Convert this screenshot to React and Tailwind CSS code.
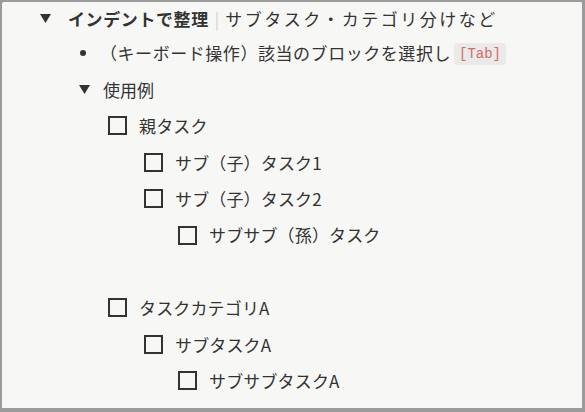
import React from "react";

const Triangle = () => (
  <svg width="11" height="9" viewBox="0 0 11 9" className="block">
    <path d="M0 0 L11 0 L5.5 9 Z" fill="#333333" />
  </svg>
);

const Checkbox = () => (
  <span className="block w-[19px] h-[19px] border-2 border-[#333333] bg-transparent" />
);

const todos = [
  { text: "親タスク", pad: "pl-[106px]", h: "h-[36.4px]" },
  { text: "サブ（子）タスク1", pad: "pl-[142px]", h: "h-[36.4px]" },
  { text: "サブ（子）タスク2", pad: "pl-[142px]", h: "h-[36.4px]" },
  { text: "サブサブ（孫）タスク", pad: "pl-[176px]", h: "h-[36.4px]" },
  null,
  { text: "タスクカテゴリA", pad: "pl-[106px]", h: "h-[36.4px]" },
  { text: "サブタスクA", pad: "pl-[142px]", h: "h-[36.4px]" },
  { text: "サブサブタスクA", pad: "pl-[176px]", h: "h-[36.4px]" },
];

export default function App() {
  return (
    <div className="w-[585px] h-[412px] bg-[#9b9b9b]">
      <div
        className="w-full h-full overflow-hidden bg-[#f7f7f5] border-l-2 border-t-2 border-r-[3px] border-b-4 border-[#9b9b9b] rounded-[4px] text-[17px] text-[#333333]"
        style={{ fontFamily: '"Noto Sans CJK JP", "Noto Sans", sans-serif' }}
      >
        {/* toggle heading */}
        <div className="h-[33px] flex items-center pl-[38px]">
          <span className="w-[28px] flex"><Triangle /></span>
          <span className="font-bold tracking-[0.6px]">インデントで整理</span>
          <span className="mx-[6px] text-[#c8c8c8] font-light">|</span>
          <span className="tracking-[2.5px]">サブタスク・カテゴリ分けなど</span>
        </div>

        {/* bullet */}
        <div className="h-[36.4px] flex items-center pl-[78px]">
          <span className="w-[20px] flex">
            <span className="block w-[6px] h-[6px] rounded-full bg-[#333333]" />
          </span>
          <span className="tracking-[0.55px]">（キーボード操作）該当のブロックを選択し</span>
          <span
            className="ml-[3px] mt-[2px] px-[5px] h-[22px] flex items-center rounded-[3px] bg-[#eaeae8] text-[#d9696a] text-[14px]"
            style={{ fontFamily: '"Liberation Mono", monospace' }}
          >
            [Tab]
          </span>
        </div>

        {/* example toggle */}
        <div className="h-[36.4px] flex items-center pl-[77px]">
          <span className="w-[24px] flex"><Triangle /></span>
          <span>使用例</span>
        </div>

        {todos.map((t, i) =>
          t ? (
            <div key={i} className={`${t.h} ${t.pad} flex items-center`}>
              <span className="w-[31px] flex"><Checkbox /></span>
              <span className="tracking-[0.15px]">{t.text}</span>
            </div>
          ) : (
            <div key={i} className="h-[36.4px]" />
          )
        )}
      </div>
    </div>
  );
}
